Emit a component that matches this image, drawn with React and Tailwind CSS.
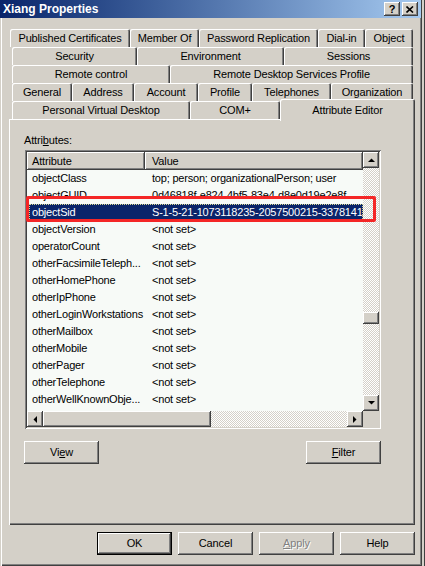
import React from 'react';

const font = "font-['Liberation_Sans',Arial,sans-serif]";
const raised = 'shadow-[inset_-1px_-1px_#404040,inset_1px_1px_#ffffff,inset_-2px_-2px_#808080]';
const tabEdge = 'shadow-[inset_1px_1px_#ffffff,inset_-1px_0_#404040,inset_-2px_0_#808080]';
const checker = 'bg-[repeating-conic-gradient(#ffffff_0%_25%,#d4d0c8_0%_50%)] bg-[length:2px_2px]';

const tabRows = [
  {
    pad: 'pl-[10px]',
    tabs: [
      ['Published Certificates', 'w-[120px]'],
      ['Member Of', 'w-[69px]'],
      ['Password Replication', 'w-[119px]'],
      ['Dial-in', 'w-[47px]'],
      ['Object', 'w-[48px]'],
    ],
  },
  {
    pad: 'pl-[12px]',
    tabs: [
      ['Security', 'w-[125px]'],
      ['Environment', 'w-[147px]'],
      ['Sessions', 'w-[129px]'],
    ],
  },
  {
    pad: 'pl-[12px]',
    tabs: [
      ['Remote control', 'w-[158px]'],
      ['Remote Desktop Services Profile', 'w-[243px]'],
    ],
  },
  {
    pad: 'pl-[12px]',
    tabs: [
      ['General', 'w-[60px]'],
      ['Address', 'w-[62px]'],
      ['Account', 'w-[64px]'],
      ['Profile', 'w-[54px]'],
      ['Telephones', 'w-[79px]'],
      ['Organization', 'w-[82px]'],
    ],
  },
];

const rows = [
  ['objectClass', 'top; person; organizationalPerson; user'],
  ['objectGUID', '0d46818f-e824-4bf5-83e4-d8e0d19e2e8f'],
  ['objectSid', 'S-1-5-21-1073118235-2057500215-3378141', true],
  ['objectVersion', '<not set>'],
  ['operatorCount', '<not set>'],
  ['otherFacsimileTeleph...', '<not set>'],
  ['otherHomePhone', '<not set>'],
  ['otherIpPhone', '<not set>'],
  ['otherLoginWorkstations', '<not set>'],
  ['otherMailbox', '<not set>'],
  ['otherMobile', '<not set>'],
  ['otherPager', '<not set>'],
  ['otherTelephone', '<not set>'],
  ['otherWellKnownObje...', '<not set>'],
];

const Arrow = ({ dir }) => {
  const pts = {
    up: '0,4 7,4 3.5,0.5',
    down: '0,0 7,0 3.5,3.5',
    left: '4,0 4,7 0.5,3.5',
    right: '0,0 0,7 3.5,3.5',
  }[dir];
  const vertical = dir === 'up' || dir === 'down';
  return (
    <svg width={vertical ? 7 : 4} height={vertical ? 4 : 7} viewBox={vertical ? '0 0 7 4' : '0 0 4 7'}>
      <polygon points={pts} fill="#000" />
    </svg>
  );
};

const ScrollBtn = ({ dir }) => (
  <div className={`w-[16px] h-[16px] shrink-0 bg-[#d4d0c8] flex items-center justify-center ${raised}`}>
    <Arrow dir={dir} />
  </div>
);

const Button = ({ children, className = '', color = 'text-black', edge = raised }) => (
  <div className={`w-[75px] h-[23px] bg-[#d4d0c8] flex items-center justify-center text-[11px] ${color} ${edge} ${className}`}>
    {children}
  </div>
);

export default function App() {
  return (
    <div className={`w-[425px] h-[566px] flex bg-[#d4d0c8] overflow-hidden tracking-[-0.15px] ${font}`}>
      {/* dialog */}
      <div className="w-[422px] h-[566px] flex flex-col shadow-[inset_1px_0_#d4d0c8,inset_2px_0_#ffffff,inset_-1px_-1px_#404040,inset_-2px_-2px_#808080]">
        {/* title bar */}
        <div className="h-[18px] w-[421px] bg-gradient-to-r from-[#0a246a] to-[#a6caf0] flex items-center justify-between pl-[3px] pr-[3px]">
          <span className="text-white font-bold text-[12px] leading-[14px] tracking-normal">Xiang Properties</span>
          <div className="flex gap-[2px]">
            <div className={`w-[16px] h-[14px] bg-[#d4d0c8] flex items-center justify-center text-[11px] font-bold leading-none ${raised}`}>?</div>
            <div className={`w-[16px] h-[14px] bg-[#d4d0c8] flex items-center justify-center ${raised}`}>
              <svg width="8" height="7" viewBox="0 0 8 7">
                <path d="M0.5 0.5 L7 6.5 M7 0.5 L0.5 6.5" stroke="#000" strokeWidth="1.6" />
              </svg>
            </div>
          </div>
        </div>

        {/* tabs */}
        <div className="mt-[11px] flex flex-col text-[11px] text-black">
          {tabRows.map((row, i) => (
            <div key={i} className={`flex h-[18px] ${row.pad}`}>
              {row.tabs.map(([label, w]) => (
                <div key={label} className={`${w} h-[18px] shrink-0 flex items-center justify-center rounded-t-[2px] whitespace-nowrap ${tabEdge}`}>
                  {label}
                </div>
              ))}
            </div>
          ))}
          <div className="flex h-[18px] pl-[12px] items-start">
            <div className={`w-[178px] h-[18px] shrink-0 flex items-center justify-center rounded-t-[2px] ${tabEdge}`}>Personal Virtual Desktop</div>
            <div className={`w-[90px] h-[18px] shrink-0 flex items-center justify-center rounded-t-[2px] ${tabEdge}`}>COM+</div>
            <div className={`relative z-10 w-[135px] h-[22px] -mt-[2px] -mb-[2px] shrink-0 bg-[#d4d0c8] flex justify-center pt-[3px] rounded-t-[2px] ${tabEdge}`}>Attribute Editor</div>
          </div>
        </div>

        {/* panel */}
        <div className="ml-[9px] w-[406px] h-[406px] shrink-0 flex flex-col pl-[15px] pt-[15px] shadow-[inset_1px_1px_#ffffff,inset_-1px_-1px_#404040,inset_-2px_-2px_#808080] text-[11px] text-black">
          <div className="leading-[13px] h-[13px]">
            Attri<span className="underline">b</span>utes:
          </div>

          <div className="relative ml-[1px] mt-[3px] w-[356px] h-[279px] p-[2px] shadow-[inset_1px_1px_#808080,inset_-1px_-1px_#ffffff,inset_2px_2px_#404040,inset_-2px_-2px_#d4d0c8]">
            <div className="flex h-[259px]">
              <div className="w-[336px] flex flex-col bg-[#f7faf7] overflow-hidden">
                <div className="flex h-[18px] shrink-0 bg-[#d4d0c8]">
                  <div className={`w-[118px] h-[18px] flex items-center pl-[5px] ${raised}`}>Attribute</div>
                  <div className={`w-[218px] h-[18px] flex items-center pl-[7px] ${raised}`}>Value</div>
                </div>
                <div className="flex flex-col pl-[2px] tracking-[-0.2px]">
                  {rows.map(([name, value, sel]) => (
                    <div
                      key={name}
                      className={`flex h-[17px] items-center whitespace-nowrap overflow-hidden ${sel ? 'bg-[#0a246a] text-white outline outline-1 outline-dotted outline-[#d8d890] -outline-offset-1' : ''}`}
                    >
                      <div className="w-[118px] shrink-0 pl-[3px] overflow-hidden">{name}</div>
                      <div className="pl-[5px]">{value}</div>
                    </div>
                  ))}
                </div>
              </div>
              {/* vertical scrollbar */}
              <div className="w-[16px] flex flex-col">
                <ScrollBtn dir="up" />
                <div className={`h-[144px] ${checker}`} />
                <div className={`h-[12px] bg-[#d4d0c8] ${raised}`} />
                <div className={`h-[71px] ${checker}`} />
                <ScrollBtn dir="down" />
              </div>
            </div>
            {/* horizontal scrollbar */}
            <div className="flex h-[16px]">
              <ScrollBtn dir="left" />
              <div className={`w-[168px] h-[16px] bg-[#d4d0c8] ${raised}`} />
              <div className={`w-[136px] h-[16px] ${checker}`} />
              <ScrollBtn dir="right" />
              <div className="w-[16px] h-[16px] bg-[#d4d0c8]" />
            </div>

            {/* red annotation box */}
            <div className="absolute left-[1px] top-[46px] w-[350px] h-[26px] border-[3px] border-[#f42626] rounded-[2px] pointer-events-none" />
          </div>

          <div className="mt-[12px] w-[357px] flex justify-between">
            <Button>
              Vi<span className="underline">e</span>w
            </Button>
            <Button>
              <span className="underline">F</span>ilter
            </Button>
          </div>
        </div>

        {/* bottom buttons */}
        <div className="mt-[7px] flex justify-end gap-[6px] pr-[7px]">
          <Button edge="shadow-[inset_0_0_0_1px_#000000,inset_-2px_-2px_#404040,inset_2px_2px_#ffffff,inset_-3px_-3px_#808080]">OK</Button>
          <Button>Cancel</Button>
          <Button color="text-[#808080] [text-shadow:1px_1px_0_#ffffff]">
            <span className="underline">A</span>pply
          </Button>
          <Button>Help</Button>
        </div>
      </div>

      {/* edge of the window behind */}
      <div className="w-[3px] h-[566px] flex justify-end">
        <div className="w-[1px] h-full bg-[#404040]" />
      </div>
    </div>
  );
}
